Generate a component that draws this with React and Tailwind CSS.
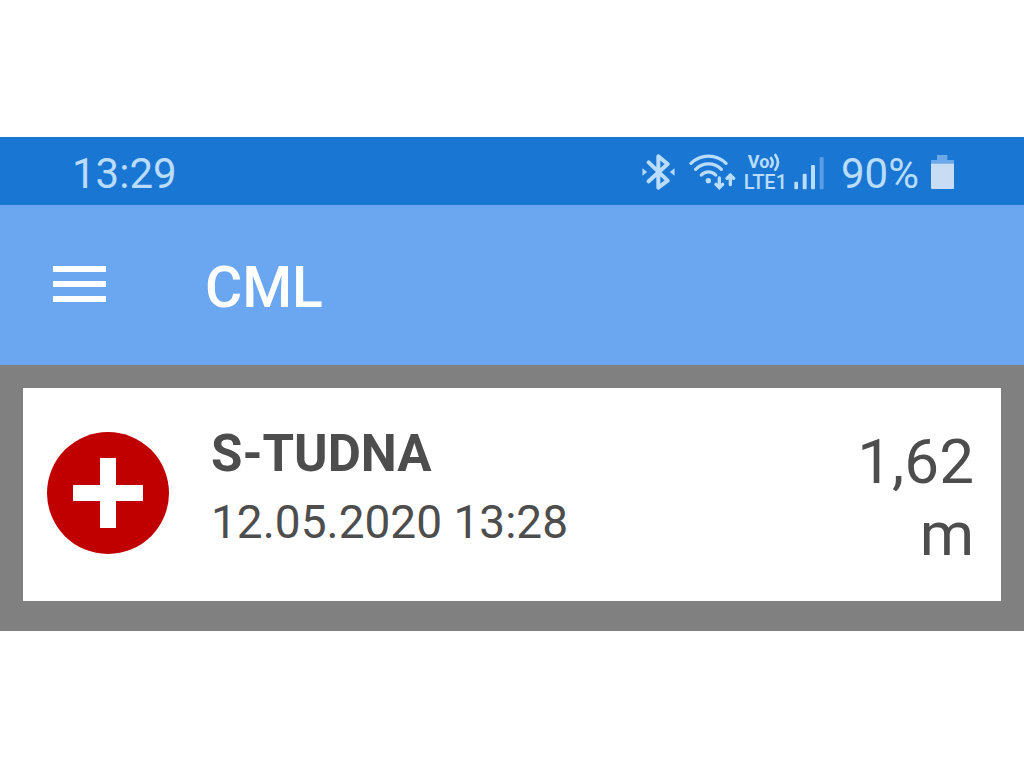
const BluetoothIcon = () => (
  <svg width="33" height="36" viewBox="0 0 99 108" fill="none" stroke="currentColor" strokeWidth="12" strokeLinejoin="round" strokeLinecap="round" aria-label="Bluetooth">
    <path d="M20 25L77 80L49 101V7L77 30L20 82" />
    <path d="M3 45L14 54L3 63ZM96 45L85 54L96 63Z" fill="currentColor" stroke="currentColor" strokeWidth="2" />
  </svg>
);

const WifiIcon = () => (
  <svg width="47" height="36" viewBox="0 0 141 108" fill="none" stroke="currentColor" strokeWidth="10" strokeLinecap="round" aria-label="Wi-Fi">
    <path d="M6 28A74 74 0 0 1 111 28M20 46A54 54 0 0 1 97 46M37 63A29 29 0 0 1 80 63" />
    <circle cx="58" cy="80" r="8" fill="currentColor" stroke="none" />
    <path d="M91 72V99M81 91L91 101L101 91M124 92V64M114 73L124 63L134 73" strokeWidth="10" />
  </svg>
);

const SignalIcon = () => (
  <svg width="32" height="36" viewBox="0 0 96 108" fill="currentColor" aria-label="Signal">
    <rect x="4" y="83" width="11" height="23" rx="3" />
    <rect x="29" y="59" width="12" height="47" rx="3" />
    <rect x="54" y="33" width="12" height="73" rx="3" />
    <rect x="80" y="9" width="12" height="97" rx="3" opacity="0.4" />
  </svg>
);

const BatteryIcon = () => (
  <svg width="23" height="36" viewBox="0 0 69 108" aria-label="Battery">
    <path d="M18 3H49V18H69V30H0V18H18Z" fill="#6ba8e8" />
    <path d="M0 29H69V102Q69 105 66 105H3Q0 105 0 102Z" fill="#c8dcf4" />
  </svg>
);

const VolteBadge = () => (
  <div className="flex flex-col text-[20px] leading-5 font-medium">
    <div className="flex items-center pl-1">
      <span className="text-[18px] leading-5 font-bold">Vo</span>
      <svg width="12" height="18" viewBox="0 0 36 54" fill="none" stroke="currentColor" strokeWidth="8" strokeLinecap="round" aria-hidden="true">
        <path d="M6 15Q16 28 6 41M19 6Q35 28 19 50" />
      </svg>
    </div>
    <span>LTE1</span>
  </div>
);

const StatusBar = () => (
  <div className="flex h-[68px] items-center justify-between bg-[#1976d2] pt-0.5 pr-[70px] pl-[72px] text-[#b9dcff]">
    <span className="pt-1 text-[42px] leading-none">13:29</span>
    <div className="flex items-center">
      <BluetoothIcon />
      <div className="ml-3.5 flex items-center gap-1.5">
        <div className="mr-0.5">
          <WifiIcon />
        </div>
        <VolteBadge />
        <SignalIcon />
      </div>
      <span className="mr-3 ml-4 pt-1 text-[42px] leading-none">90%</span>
      <BatteryIcon />
    </div>
  </div>
);

const AppBar = () => (
  <header className="flex h-[160px] items-center bg-[#6ba6f0] px-[53px] pb-0.5 text-white">
    <button type="button" aria-label="Menu" className="flex w-[53px] flex-col gap-[9px]">
      <span className="h-1.5 w-full bg-white" />
      <span className="h-1.5 w-full bg-white" />
      <span className="h-1.5 w-full bg-white" />
    </button>
    <h1 className="ml-[99px] pt-1.5 text-[57px] leading-none font-medium">CML</h1>
  </header>
);

const MeasurementCard = ({ name, time, value, unit }) => (
  <article className="flex h-[213px] items-start bg-white pr-[27px] pl-6 text-[#4d4d4d]">
    <svg className="mt-11 shrink-0" width="122" height="122" viewBox="0 0 122 122" aria-hidden="true">
      <circle cx="61" cy="61" r="61" fill="#c00000" />
      <path d="M53 26H69V53H96V69H69V96H53V69H26V53H53Z" fill="#fff" />
    </svg>
    <div className="mt-8 ml-[42px] grow">
      <h2 className="text-[51px] leading-[68px] font-bold">{name}</h2>
      <p className="text-[46px] leading-[68px]">{time}</p>
    </div>
    <p className="mt-[38px] text-right text-[62px] leading-[72px]">
      {value}
      <br />
      {unit}
    </p>
  </article>
);

const App = () => {
  return (
    <div className="min-h-screen bg-white pt-[137px] font-['Roboto',sans-serif]">
      <StatusBar />
      <AppBar />
      <main className="bg-[#808080] px-[23px] pt-[23px] pb-[30px]">
        <MeasurementCard name="S-TUDNA" time="12.05.2020 13:28" value="1,62" unit="m" />
      </main>
    </div>
  );
};

export default App;
